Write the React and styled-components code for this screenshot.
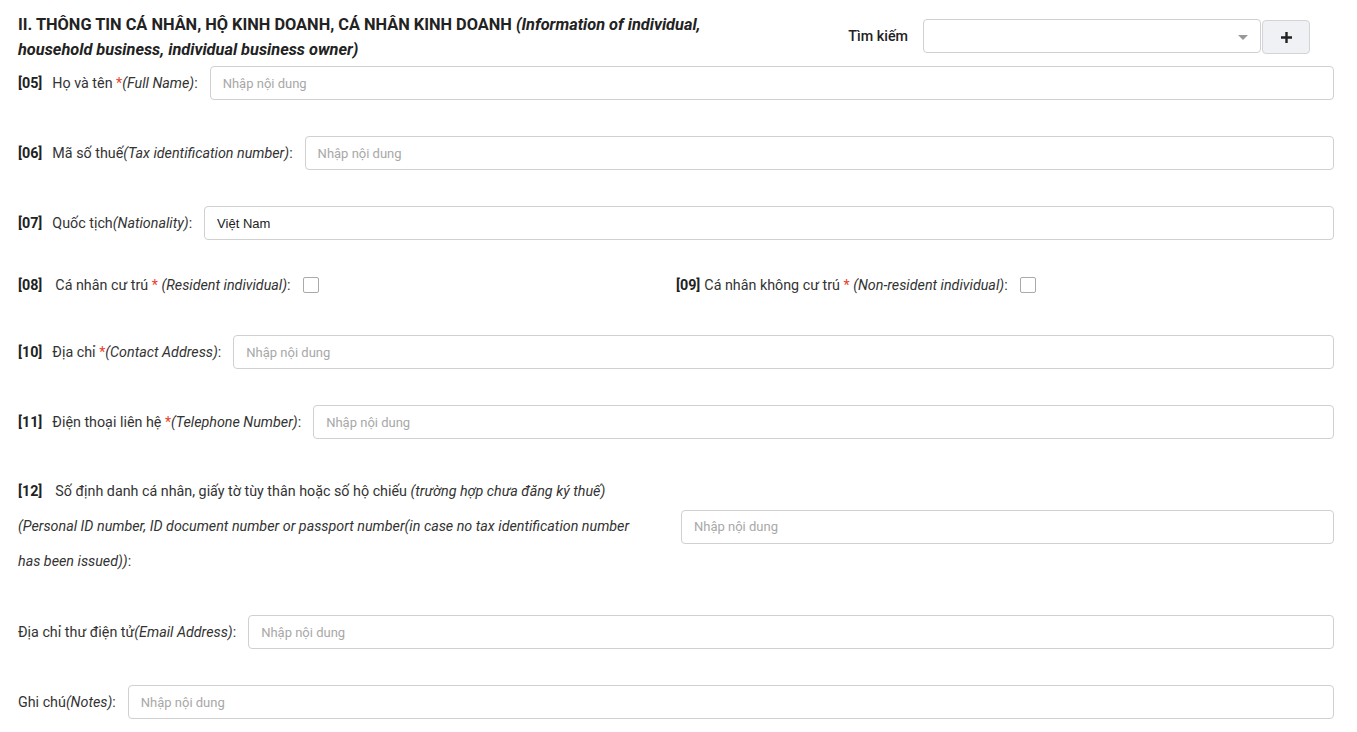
import React from "react";
import styled, { createGlobalStyle } from "styled-components";

const Global = createGlobalStyle`
  html, body { margin: 0; padding: 0; background: #fff; }
  body { font-family: Roboto, "Noto Sans", sans-serif; color: #333; }
  * { box-sizing: border-box; }
`;

const Page = styled.div`
  padding: 12px 23px 0 18px;
  display: flex;
  flex-direction: column;
`;

const Header = styled.div`
  display: flex;
  align-items: flex-start;
  justify-content: space-between;
`;

const Title = styled.h2`
  margin: 0;
  width: 720px;
  font-size: 16.35px;
  line-height: 25px;
  font-weight: 700;
  color: #222;
  em { font-style: italic; }
`;

const Search = styled.div`
  display: flex;
  align-items: center;
  margin-top: 6px;
  margin-right: 24px;
`;

const SearchLabel = styled.span`
  font-size: 14.3px;
  font-weight: 500;
  color: #222;
  margin-right: 15px;
`;

const Select = styled.div`
  width: 338px;
  height: 34px;
  border: 1px solid #d0d0d0;
  border-radius: 4px;
  background: #fff;
  position: relative;
  &::after {
    content: "";
    position: absolute;
    right: 12px;
    top: 15px;
    border-left: 5px solid transparent;
    border-right: 5px solid transparent;
    border-top: 5px solid #999;
  }
`;

const AddButton = styled.button`
  width: 48px;
  height: 34px;
  margin-left: 1px;
  margin-top: 2px;
  border: 1px solid #d3d3d8;
  border-radius: 4px;
  background: #f0f1f5;
  display: flex;
  align-items: center;
  justify-content: center;
  padding: 0;
`;

const Row = styled.div`
  display: flex;
  align-items: center;
  height: 34px;
  margin-top: ${(p) => p.$mt || 36}px;
`;

const Label = styled.label`
  font-size: 14.3px;
  color: #333;
  white-space: nowrap;
  margin-right: 12px;
  i { font-style: italic; }
`;

const Code = styled.b`
  font-weight: 700;
  color: #222;
  margin-right: ${(p) => p.$gap ?? 10}px;
`;

const Req = styled.span`
  color: #e8402b;
`;

const Input = styled.input`
  flex: 1;
  height: 34px;
  border: 1px solid #d0d0d0;
  border-radius: 4px;
  padding: 0 12px;
  font-family: "Liberation Sans", Arial, sans-serif;
  font-size: 13px;
  color: #222;
  outline: none;
  &::placeholder {
    font-family: Roboto, sans-serif;
    color: #a8a8a8;
  }
`;

const Half = styled.div`
  display: flex;
  align-items: center;
  flex: 0 0 ${(p) => p.$w}px;
`;

const Check = styled.span`
  display: inline-block;
  width: 16px;
  height: 16px;
  border: 1px solid #aaa;
  border-radius: 2px;
  background: #fff;
`;

const Block = styled.div`
  display: grid;
  grid-template-columns: 658px 1fr;
  align-items: center;
  margin-top: 35px;
`;

const BlockLabel = styled.div`
  font-size: 14.3px;
  line-height: 35px;
  color: #333;
  padding-right: 24px;
  i { font-style: italic; }
`;

const BlockInput = styled.div`
  display: flex;
  padding-left: 5px;
`;

function Field({ code, gap, children, value, mt }) {
  return (
    <Row $mt={mt}>
      <Label>
        {code && <Code $gap={gap}>{code}</Code>}
        {children}
      </Label>
      <Input placeholder="Nhập nội dung" defaultValue={value} />
    </Row>
  );
}

export default function App() {
  return (
    <>
      <Global />
      <Page>
        <Header>
          <Title>
            II. THÔNG TIN CÁ NHÂN, HỘ KINH DOANH, CÁ NHÂN KINH DOANH{" "}
            <em>(Information of individual, household business, individual business owner)</em>
          </Title>
          <Search>
            <SearchLabel>Tìm kiếm</SearchLabel>
            <Select />
            <AddButton aria-label="add">
              <svg width="13" height="13" viewBox="0 0 13 13">
                <path d="M6.5 1v11M1 6.5h11" stroke="#222" strokeWidth="2.4" />
              </svg>
            </AddButton>
          </Search>
        </Header>

        <Field code="[05]" mt={4}>
          Họ và tên <Req>*</Req><i>(Full Name)</i>:
        </Field>
        <Field code="[06]">
          Mã số thuế<i>(Tax identification number)</i>:
        </Field>
        <Field code="[07]" value="Việt Nam">
          Quốc tịch<i>(Nationality)</i>:
        </Field>

        <Row $mt={28}>
          <Half $w={658}>
            <Label>
              <Code $gap={13}>[08]</Code>
              Cá nhân cư trú <Req>*</Req> <i>(Resident individual)</i>:
            </Label>
            <Check />
          </Half>
          <Half $w={400}>
            <Label>
              <Code $gap={4}>[09]</Code>
              Cá nhân không cư trú <Req>*</Req> <i>(Non-resident individual)</i>:
            </Label>
            <Check />
          </Half>
        </Row>

        <Field code="[10]" mt={33}>
          Địa chỉ <Req>*</Req><i>(Contact Address)</i>:
        </Field>
        <Field code="[11]">
          Điện thoại liên hệ <Req>*</Req><i>(Telephone Number)</i>:
        </Field>

        <Block>
          <BlockLabel>
            <Code $gap={13}>[12]</Code>
            Số định danh cá nhân, giấy tờ tùy thân hoặc số hộ chiếu{" "}
            <i>(trường hợp chưa đăng ký thuế)</i>
            <br />
            <i>
              (Personal ID number, ID document number or passport number(in case no tax identification number
              has been issued))
            </i>
            :
          </BlockLabel>
          <BlockInput>
            <Input placeholder="Nhập nội dung" />
          </BlockInput>
        </Block>

        <Field mt={36}>
          Địa chỉ thư điện tử<i>(Email Address)</i>:
        </Field>
        <Field>
          Ghi chú<i>(Notes)</i>:
        </Field>
      </Page>
    </>
  );
}
